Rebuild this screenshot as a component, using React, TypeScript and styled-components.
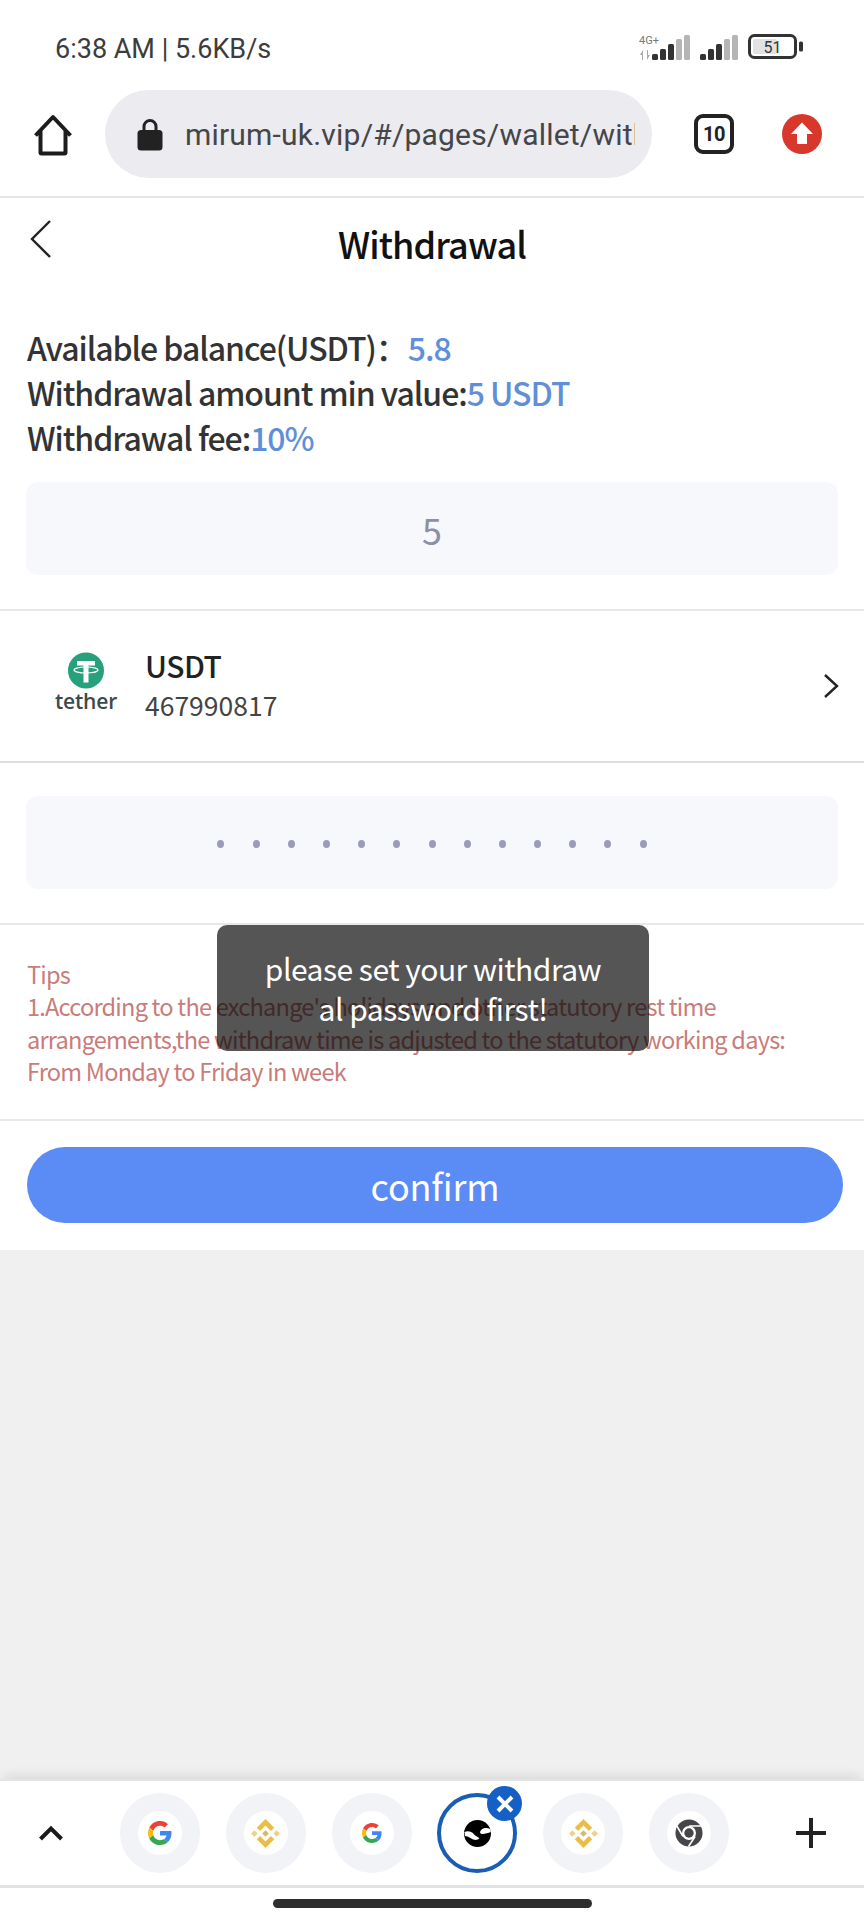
import React from 'react';
import styled, { createGlobalStyle } from 'styled-components';

const CJK = `"Noto Sans CJK SC", "Noto Sans", sans-serif`;

const GlobalStyle = createGlobalStyle`
  html, body {
    margin: 0;
    padding: 0;
    background: #fff;
  }
  * {
    box-sizing: border-box;
  }
`;

const Screen = styled.div`
  width: 864px;
  height: 1920px;
  position: relative;
  display: flex;
  flex-direction: column;
  background: #f0f0f1;
  overflow: hidden;
  font-family: ${CJK};
`;

const StatusBar = styled.div`
  height: 90px;
  background: #fff;
  padding: 31px 61px 0 55px;
  display: flex;
  justify-content: space-between;
  align-items: flex-start;
`;
const StatusText = styled.div`
  font-family: Roboto, sans-serif;
  font-size: 27px;
  line-height: 36px;
  color: #3c3c3c;
`;
const StatusIcons = styled.div`
  display: flex;
  align-items: flex-start;
  gap: 10px;
  margin-top: 3px;
`;
const BrowserBar = styled.div`
  height: 108px;
  background: #fff;
  border-bottom: 2px solid #e6e6e8;
  display: flex;
  align-items: flex-start;
  padding-left: 33px;
`;
const HomeSlot = styled.div`
  width: 72px;
  padding-top: 24px;
`;
const UrlBar = styled.div`
  width: 547px;
  height: 88px;
  border-radius: 44px;
  background: #ebebf0;
  display: flex;
  align-items: center;
  padding-left: 32px;
`;
const UrlText = styled.div`
  width: 450px;
  margin-left: 22px;
  overflow: hidden;
  white-space: nowrap;
  font-family: Roboto, sans-serif;
  font-size: 30px;
  letter-spacing: 0.2px;
  color: #45454a;
`;
const BrowserActions = styled.div`
  display: flex;
  gap: 48px;
  margin-left: 42px;
  padding-top: 24px;
`;
const TabCount = styled.div`
  width: 40px;
  height: 40px;
  border: 4px solid #222;
  border-radius: 9px;
  display: flex;
  align-items: center;
  justify-content: center;
  font-family: Roboto, sans-serif;
  font-weight: 700;
  font-size: 20px;
  letter-spacing: -0.5px;
  color: #222;
`;

const Page = styled.div`
  background: #fff;
`;
const Header = styled.div`
  height: 94px;
  position: relative;
  display: flex;
  align-items: center;
  justify-content: center;
`;
const BackIcon = styled.svg`
  position: absolute;
  left: 29px;
  top: 21px;
`;
const Title = styled.div`
  font-size: 36px;
  font-weight: 500;
  color: #111;
  letter-spacing: -0.9px;
  margin-top: -4px;
`;
const Info = styled.div`
  padding: 33px 27px 0;
`;
const InfoLine = styled.div`
  height: 45px;
  line-height: 45px;
  font-size: 32px;
  font-weight: 500;
  color: #333;
  letter-spacing: -1.05px;
  white-space: nowrap;
`;
const Accent = styled.span<{ $gap?: number }>`
  color: #5f8fd8;
  margin-left: ${p => p.$gap || 0}px;
`;
const FieldWrap = styled.div<{ $top: number; $bottom: number }>`
  padding: ${p => p.$top}px 26px ${p => p.$bottom}px 26px;
  border-bottom: 2px solid #e8e8ea;
`;
const Field = styled.div`
  height: 93px;
  border-radius: 12px;
  background: #f7f8fc;
  display: flex;
  align-items: center;
  justify-content: center;
  font-size: 36px;
  color: #8d8fa5;
`;
const Dots = styled.div`
  display: flex;
  gap: 28.2px;
  margin-top: 2px;
`;
const Dot = styled.span`
  width: 7px;
  height: 8px;
  border-radius: 50%;
  background: #9a9cb8;
`;
const CoinRow = styled.div`
  height: 152px;
  padding-left: 56px;
  padding-right: 25px;
  border-bottom: 2px solid #dfdfe1;
  display: flex;
  align-items: center;
`;
const TetherLogo = styled.div`
  width: 60px;
  display: flex;
  flex-direction: column;
  align-items: center;
  margin-top: -9px;
`;
const TetherName = styled.div`
  font-family: "Open Sans", sans-serif;
  font-weight: 600;
  font-size: 21px;
  line-height: 20px;
  letter-spacing: -0.2px;
  color: #3d4a4b;
  margin-top: 2px;
`;
const CoinText = styled.div`
  margin-left: 29px;
  margin-top: -2px;
  flex: 1;
`;
const CoinName = styled.div`
  font-size: 30px;
  font-weight: 500;
  line-height: 40px;
  letter-spacing: -0.5px;
  color: #222;
`;
const CoinId = styled.div`
  font-size: 26.500px;
  line-height: 40px;
  color: #444;
`;
const Tips = styled.div`
  padding: 33px 27px 32px;
  border-bottom: 2px solid #e9e9eb;
  font-size: 23.600px;
  line-height: 32.300px;
  letter-spacing: -0.8px;
  color: #c97c7a;
  white-space: nowrap;
`;
const ButtonWrap = styled.div`
  padding: 26px 21px 27px 27px;
`;
const ConfirmButton = styled.div`
  height: 76px;
  border-radius: 38px;
  background: #5b8bf5;
  color: #fff;
  font-size: 36px;
  letter-spacing: -0.2px;
  display: flex;
  align-items: center;
  justify-content: center;
`;
const Toast = styled.div`
  position: absolute;
  left: 217px;
  top: 925px;
  width: 432px;
  height: 126px;
  padding: 23px 44px 0;
  border-radius: 10px;
  background: rgba(0, 0, 0, 0.667);
  color: #fff;
  font-size: 30px;
  line-height: 40px;
  letter-spacing: -0.5px;
  text-align: center;
  word-break: break-all;
`;

const Spacer = styled.div`
  flex: 1;
`;
const TabBar = styled.div`
  height: 109px;
  background: #fff;
  border-top: 2px solid #e4e4e4;
  border-bottom: 3px solid #e2e2e4;
  box-shadow: 0 -8px 10px -4px rgba(0, 0, 0, 0.09);
  display: flex;
  align-items: center;
  padding-left: 38px;
`;
const TabChevron = styled.svg`
  margin-right: 56px;
`;
const Tabs = styled.div`
  display: flex;
  gap: 25.800px;
`;
const TabBubble = styled.div<{ $active?: boolean }>`
  width: 80px;
  height: 80px;
  border-radius: 50%;
  position: relative;
  display: flex;
  align-items: center;
  justify-content: center;
  background: #fff;
  border: ${p => (p.$active ? '4px solid #1a5db5' : '18px solid #f2f3f6')};
`;
const CloseBadge = styled.div`
  position: absolute;
  right: -9px;
  top: -11px;
  width: 35px;
  height: 35px;
  border-radius: 50%;
  background: #1560c4;
  display: flex;
  align-items: center;
  justify-content: center;
`;
const PlusIcon = styled.svg`
  margin-left: 66px;
`;
const HomeIndicatorArea = styled.div`
  height: 32px;
  background: #fff;
  display: flex;
  justify-content: center;
  padding-top: 11px;
`;
const HomeIndicator = styled.div`
  width: 319px;
  height: 9px;
  border-radius: 5px;
  background: #2e2e30;
`;

function SignalIcon({ withLabel }: { withLabel?: boolean }) {
  const bars = [
    { x: 0, h: 6, c: '#333' },
    { x: 8, h: 11, c: '#333' },
    { x: 16, h: 16, c: '#333' },
    { x: 24, h: 21, c: '#b5b5b5' },
    { x: 32, h: 25, c: '#b5b5b5' },
  ];
  const left = withLabel ? 14 : 0;
  return (
    <svg width={left + 38} height="28" viewBox={`${-left} 0 ${left + 38} 28`}>
      {bars.map(b => (
        <rect key={b.x} x={b.x} y={26 - b.h} width="6" height={b.h} rx="1.500" fill={b.c} />
      ))}
      {withLabel && (
        <>
          <path d="M-9 16l-3 5h2v5h1zM-5 26l3-5h-2v-5h-1z" fill="#aaa" />
          <text x="-13" y="10" fontFamily="Roboto, sans-serif" fontSize="11" fill="#777">
            4G+
          </text>
        </>
      )}
    </svg>
  );
}

function BatteryIcon() {
  return (
    <svg width="55" height="26" viewBox="0 0 55 26">
      <rect x="1.500" y="1.500" width="46" height="22" rx="5" fill="#fff" stroke="#333" strokeWidth="3" />
      <rect x="5" y="5" width="24" height="15" rx="2" fill="#e2e2e2" />
      <rect x="51" y="7.500" width="4" height="10" rx="1.500" fill="#333" />
      <text x="24.500" y="18.500" textAnchor="middle" fontFamily="Roboto, sans-serif" fontSize="16" fill="#333">
        51
      </text>
    </svg>
  );
}

function HomeIcon() {
  return (
    <svg width="40" height="42" viewBox="0 0 40 42">
      <path
        d="M2.500 21.500L20 3l17.500 18.500M7.500 17v21.500a1 1 0 0 0 1 1h23a1 1 0 0 0 1-1V17"
        fill="none"
        stroke="#1c1c1c"
        strokeWidth="4"
        strokeLinejoin="round"
      />
    </svg>
  );
}

function LockIcon() {
  return (
    <svg width="26" height="33" viewBox="0 0 26 33">
      <path d="M7 13V8.500a6 6 0 0 1 12 0V13" fill="none" stroke="#222" strokeWidth="3" />
      <rect x="0.500" y="12" width="25" height="20.500" rx="3.500" fill="#222" />
    </svg>
  );
}

function UploadBadge() {
  return (
    <svg width="40" height="40" viewBox="0 0 40 40">
      <circle cx="20" cy="20" r="20" fill="#d8382c" />
      <path d="M20 8.500L31 20h-6v10H15V20H9z" fill="#fff" />
    </svg>
  );
}

function TetherIcon() {
  return (
    <svg width="36" height="37" viewBox="0 0 36 36">
      <circle cx="18" cy="18" r="18" fill="#26a17b" />
      <path d="M9 8.500h18v4.500h-6.500v17h-5V13H9z" fill="#fff" />
      <ellipse cx="18" cy="17.500" rx="12" ry="3" fill="none" stroke="#fff" strokeWidth="1.200" />
    </svg>
  );
}

function GoogleIcon({ size }: { size: number }) {
  return (
    <svg width={size} height={size} viewBox="0 0 48 48">
      <path fill="#EA4335" d="M24 9.500c3.540 0 6.710 1.220 9.210 3.600l6.850-6.850C35.900 2.380 30.470 0 24 0 14.620 0 6.510 5.380 2.560 13.220l7.980 6.190C12.430 13.720 17.740 9.500 24 9.500z" />
      <path fill="#4285F4" d="M46.980 24.550c0-1.570-.15-3.090-.38-4.550H24v9.020h12.940c-.58 2.960-2.260 5.480-4.780 7.180l7.730 6c4.510-4.180 7.090-10.360 7.090-17.650z" />
      <path fill="#FBBC05" d="M10.530 28.590c-.48-1.450-.76-2.990-.76-4.590s.27-3.140.76-4.590l-7.980-6.190C.92 16.460 0 20.120 0 24c0 3.880.92 7.540 2.560 10.780l7.970-6.190z" />
      <path fill="#34A853" d="M24 48c6.480 0 11.930-2.130 15.890-5.810l-7.730-6c-2.150 1.450-4.920 2.300-8.160 2.300-6.260 0-11.570-4.220-13.470-9.910l-7.980 6.190C6.510 42.620 14.620 48 24 48z" />
    </svg>
  );
}

function BinanceIcon() {
  return (
    <svg width="31" height="31" viewBox="0 0 32 32">
      <path
        fill="#e9bd4a"
        d="M16 1l9 9-3.400 3.400L16 7.800l-5.600 5.600L7 10zM7 22l3.400-3.400 5.600 5.600 5.600-5.600L25 22l-9 9z"
      />
      <path fill="#ecd18a" d="M4.500 12.600L7.900 16l-3.400 3.400L1.100 16zM27.500 12.600l3.400 3.400-3.400 3.400-3.400-3.400z" />
      <path fill="#cdbf5e" d="M16 12.600l3.400 3.400-3.400 3.400-3.400-3.400z" />
    </svg>
  );
}

function ChromeIcon() {
  return (
    <svg width="28" height="28" viewBox="0 0 30 30">
      <circle cx="15" cy="15" r="14.500" fill="#45454a" />
      <circle cx="15" cy="15" r="7.500" fill="#fff" />
      <circle cx="15" cy="15" r="5" fill="#45454a" />
      <path d="M15 7.500h13.500M8.500 18.700L2 7.500M21.500 18.700L14.500 29.500" stroke="#fff" strokeWidth="1.800" fill="none" />
    </svg>
  );
}

function GlobeIcon() {
  return (
    <svg width="27" height="27" viewBox="0 0 28 28">
      <circle cx="14" cy="14" r="14" fill="#000" />
      <path
        d="M0.500 12.500C4 11 8 12 10 14.500 12 17 15 17.500 16 19c-2 2.500-6 2-8 .5-2.500-2-5-3-7-3zM27.500 9.500C24 7.500 20 8 18 10c-2 2-1.500 4 .5 4.500 2.500.5 6.500-1 9.300-2z"
        fill="#fff"
      />
    </svg>
  );
}

export default function App() {
  return (
    <Screen>
      <GlobalStyle />
      <StatusBar>
        <StatusText>6:38 AM | 5.6KB/s</StatusText>
        <StatusIcons>
          <SignalIcon withLabel />
          <SignalIcon />
          <BatteryIcon />
        </StatusIcons>
      </StatusBar>
      <BrowserBar>
        <HomeSlot>
          <HomeIcon />
        </HomeSlot>
        <UrlBar>
          <LockIcon />
          <UrlText>mirum-uk.vip/#/pages/wallet/withdraw</UrlText>
        </UrlBar>
        <BrowserActions>
          <TabCount>10</TabCount>
          <UploadBadge />
        </BrowserActions>
      </BrowserBar>
      <Page>
        <Header>
          <BackIcon width="24" height="40" viewBox="0 0 24 40">
            <path d="M21 2L3 20l18 18" fill="none" stroke="#222" strokeWidth="2.400" />
          </BackIcon>
          <Title>Withdrawal</Title>
        </Header>
        <Info>
          <InfoLine>
            Available balance(USDT)：<Accent $gap={1}>5.8</Accent>
          </InfoLine>
          <InfoLine>
            Withdrawal amount min value:<Accent>5 USDT</Accent>
          </InfoLine>
          <InfoLine>
            Withdrawal fee:<Accent>10%</Accent>
          </InfoLine>
        </Info>
        <FieldWrap $top={22} $bottom={34}>
          <Field>5</Field>
        </FieldWrap>
        <CoinRow>
          <TetherLogo>
            <TetherIcon />
            <TetherName>tether</TetherName>
          </TetherLogo>
          <CoinText>
            <CoinName>USDT</CoinName>
            <CoinId>467990817</CoinId>
          </CoinText>
          <svg width="16" height="26" viewBox="0 0 16 26">
            <path d="M2 2l12 11L2 24" fill="none" stroke="#222" strokeWidth="2.400" />
          </svg>
        </CoinRow>
        <FieldWrap $top={33} $bottom={34}>
          <Field>
            <Dots>
              {Array.from({ length: 13 }).map((_, i) => (
                <Dot key={i} />
              ))}
            </Dots>
          </Field>
        </FieldWrap>
        <Tips>
          Tips
          <br />
          1.According to the exchange's holidays and other statutory rest time
          <br />
          arrangements,the withdraw time is adjusted to the statutory working days:
          <br />
          From Monday to Friday in week
        </Tips>
        <ButtonWrap>
          <ConfirmButton>confirm</ConfirmButton>
        </ButtonWrap>
      </Page>
      <Spacer />
      <TabBar>
        <TabChevron width="26" height="16" viewBox="0 0 26 16">
          <path d="M2.500 14L13 3.500 23.500 14" fill="none" stroke="#1a1a1a" strokeWidth="4" />
        </TabChevron>
        <Tabs>
          <TabBubble>
            <GoogleIcon size={24} />
          </TabBubble>
          <TabBubble>
            <BinanceIcon />
          </TabBubble>
          <TabBubble>
            <GoogleIcon size={20} />
          </TabBubble>
          <TabBubble $active>
            <GlobeIcon />
            <CloseBadge>
              <svg width="20" height="20" viewBox="0 0 20 20">
                <path d="M3 3l14 14M17 3L3 17" stroke="#fff" strokeWidth="4" />
              </svg>
            </CloseBadge>
          </TabBubble>
          <TabBubble>
            <BinanceIcon />
          </TabBubble>
          <TabBubble>
            <ChromeIcon />
          </TabBubble>
        </Tabs>
        <PlusIcon width="32" height="32" viewBox="0 0 32 32">
          <path d="M16 1v30M1 16h30" stroke="#222" strokeWidth="4" />
        </PlusIcon>
      </TabBar>
      <HomeIndicatorArea>
        <HomeIndicator />
      </HomeIndicatorArea>
      <Toast>please set your withdrawal password first!</Toast>
    </Screen>
  );
}
